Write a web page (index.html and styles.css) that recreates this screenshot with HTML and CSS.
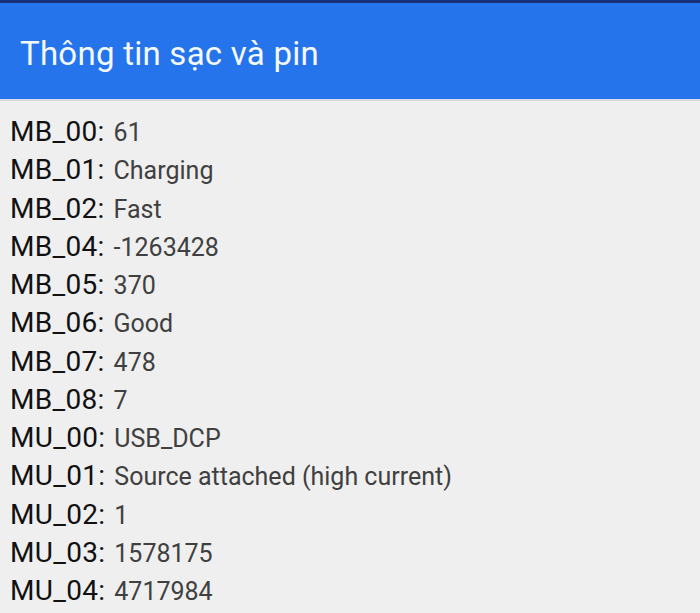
FILE: index.html
```html
<!DOCTYPE html>
<html lang="vi">
<head>
  <meta charset="UTF-8">
  <title>Thông tin sạc và pin</title>
  <link rel="stylesheet" href="styles.css">
</head>
<body>
  <div class="status-strip"></div>
  <header class="app-bar">
    <h1>Thông tin sạc và pin</h1>
  </header>

  <!-- danh sách thông số -->
  <ul class="info-list">
    <li><span class="key">MB_00:</span><span class="val">61</span></li>
    <li><span class="key">MB_01:</span><span class="val">Charging</span></li>
    <li><span class="key">MB_02:</span><span class="val">Fast</span></li>
    <li><span class="key">MB_04:</span><span class="val">-1263428</span></li>
    <li><span class="key">MB_05:</span><span class="val">370</span></li>
    <li><span class="key">MB_06:</span><span class="val">Good</span></li>
    <li><span class="key">MB_07:</span><span class="val">478</span></li>
    <li><span class="key">MB_08:</span><span class="val">7</span></li>
    <li><span class="key">MU_00:</span><span class="val">USB_DCP</span></li>
    <li><span class="key">MU_01:</span><span class="val">Source attached (high current)</span></li>
    <li><span class="key">MU_02:</span><span class="val">1</span></li>
    <li><span class="key">MU_03:</span><span class="val">1578175</span></li>
    <li><span class="key">MU_04:</span><span class="val">4717984</span></li>
  </ul>
</body>
</html>
```

FILE: styles.css
```css
* {
  box-sizing: border-box;
  margin: 0;
  padding: 0;
}
body {
  background: #efefef;
  font-family: Roboto, "Noto Sans", sans-serif;
  overflow: hidden;
}

/* ---------- BARRA SUPERIOR ---------- */
.status-strip {
  height: 3px;
  background: #16307a;
}
.app-bar {
  height: 98px;
  background: #2574ec;
  display: flex;
  align-items: center;
  padding: 4px 20px 0;
  border-bottom: 2px solid #d6dbe6;
}
.app-bar h1 {
  color: #f4f8ff;
  font-size: 33px;
  font-weight: 400;
  letter-spacing: 0.25px;
}

/* ---------- LISTA ---------- */
.info-list {
  list-style: none;
  padding: 12px 10px 0;
}
.info-list li {
  height: 38.25px;
  display: flex;
  align-items: baseline;
  white-space: pre;
}
.info-list .key {
  color: #111;
  font-size: 28px;
  line-height: 38px;
  letter-spacing: 0.3px;
}
.info-list .val {
  color: #404040;
  font-size: 25px;
  margin-left: 9px;
}
```
